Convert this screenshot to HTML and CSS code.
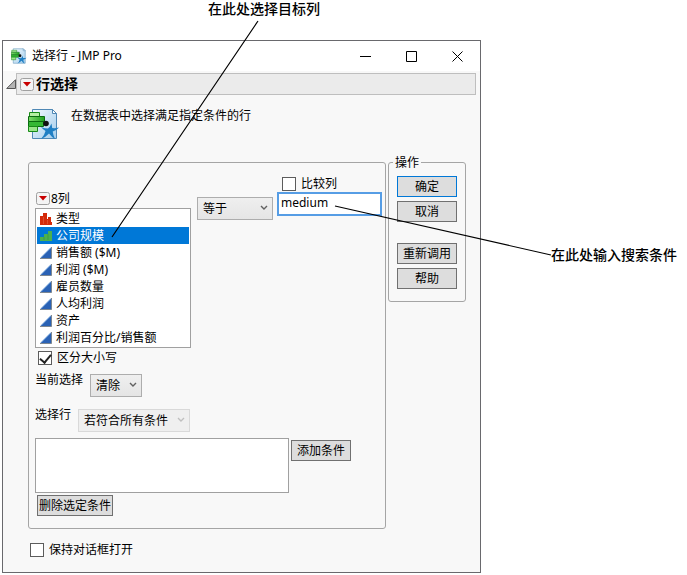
FILE: index.html
```html
<!DOCTYPE html>
<html lang="zh-CN">
<head>
    <meta charset="UTF-8">
    <title>选择行 - JMP Pro</title>
    <link rel="stylesheet" href="styles.css">
</head>
<body>
<!-- shared icons -->
<svg class="defs" width="0" height="0">
    <defs>
        <linearGradient id="page-fill" x1="0" y1="0" x2="1" y2="1">
            <stop offset="0" stop-color="#f2f9fe"/>
            <stop offset="1" stop-color="#a3cdec"/>
        </linearGradient>
        <linearGradient id="bar-fill" x1="0" y1="0" x2="1" y2="0">
            <stop offset="0" stop-color="#7fdc6b"/>
            <stop offset="1" stop-color="#1fa01f"/>
        </linearGradient>
    </defs>
    <symbol id="rows" viewBox="0 0 32 32">
        <path d="M4.500 1.500h20l4 4v25h-24z" fill="url(#page-fill)" stroke="#4f88b5"/>
        <path d="M24.500 1.500v4h4z" fill="#fff" stroke="#4f88b5"/>
        <path d="M1.500 4.500h10v4h-10z" fill="#b5efa4" stroke="#178a17"/>
        <path d="M.5 8.500h16v5H.5z" fill="url(#bar-fill)" stroke="#0b6b10"/>
        <path d="M.5 13.500h15v5H.5z" fill="#35b834" stroke="#0b6b10"/>
        <path d="M.5 18.500h9v5H.5z" fill="#9be58a" stroke="#178a17"/>
        <circle cx="18" cy="15.500" r="2.800" fill="#111"/>
        <path d="M13 19q4 1.500 7 1.500 2-1.500 3.500-5l.7 4.500q3 .5 7-.5-3 3-6.500 4 .5 4 2.300 7.500-3-1.500-6-5.500-3 3.500-8 5.500 3.500-3.500 4.500-8-2.500-1.500-4.500-4z" fill="#1f7fc4"/>
    </symbol>
    <symbol id="chevron" viewBox="0 0 8 6">
        <path d="M1 1l3 3 3-3" fill="none" stroke="currentColor" stroke-width="1.400"/>
    </symbol>
    <symbol id="red" viewBox="0 0 14 13">
        <rect x=".5" y=".5" width="13" height="12" rx="2" fill="#f4f4f4" stroke="#a0a0a0"/>
        <path d="M3 4h8L7 8.500z" fill="#c80000"/>
    </symbol>
    <symbol id="nominal" viewBox="0 0 12 12">
        <path d="M0 3h3V0h4v6h1V4h3v5h1v3H0z" fill="#d42a0a"/>
        <path d="M3.500 4v7M7.500 7v4" stroke="#ef8060" stroke-width=".4"/>
    </symbol>
    <symbol id="ordinal" viewBox="0 0 12 12">
        <path d="M0 7h4V4h4V1h4v10H0z" fill="#4bb04f"/>
        <path d="M4 7v3M8 4v6" stroke="#2e8a3c" stroke-width=".5"/>
    </symbol>
    <symbol id="continuous" viewBox="0 0 12 12">
        <path d="M0 11.500L11.500 0v11.500z" fill="#2a62b5"/>
        <path d="M1 10.500L11 .5" stroke="#79a9e0" stroke-width=".8"/>
        <path d="M0 11.500h11.500V0" fill="none" stroke="#7d8791"/>
    </symbol>
</svg>

<div class="figure">
    <p class="callout callout-top">在此处选择目标列</p>

    <div class="dialog">
        <div class="titlebar">
            <svg class="title-icon"><use href="#rows"/></svg>
            <span class="title">选择行 - JMP Pro</span>
            <button class="win-btn" aria-label="最小化"><svg viewBox="0 0 11 11"><path d="M0 5.500h11"/></svg></button>
            <button class="win-btn" aria-label="最大化"><svg viewBox="0 0 11 11"><path d="M.5.5h10v10H.5z"/></svg></button>
            <button class="win-btn" aria-label="关闭"><svg viewBox="0 0 11 11"><path d="M.5.5l10 10M10.500.5l-10 10"/></svg></button>
        </div>

        <div class="outline">
            <svg class="disclosure" viewBox="0 0 10 10"><path d="M.7 9.500h8.800V.7z"/></svg>
            <h1 class="outline-title"><svg class="red"><use href="#red"/></svg>行选择</h1>
        </div>

        <div class="intro">
            <svg class="intro-icon"><use href="#rows"/></svg>
            <p>在数据表中选择满足指定条件的行</p>
        </div>

        <div class="content">
            <div class="panel">
                <div class="criteria">
                    <div class="columns">
                        <div class="columns-head"><svg class="red"><use href="#red"/></svg>8列</div>
                        <ul class="list" role="listbox" aria-label="列">
                            <li role="option"><svg><use href="#nominal"/></svg>类型</li>
                            <li role="option" class="selected" aria-selected="true"><svg><use href="#ordinal"/></svg>公司规模</li>
                            <li role="option"><svg><use href="#continuous"/></svg>销售额 ($M)</li>
                            <li role="option"><svg><use href="#continuous"/></svg>利润 ($M)</li>
                            <li role="option"><svg><use href="#continuous"/></svg>雇员数量</li>
                            <li role="option"><svg><use href="#continuous"/></svg>人均利润</li>
                            <li role="option"><svg><use href="#continuous"/></svg>资产</li>
                            <li role="option"><svg><use href="#continuous"/></svg>利润百分比/销售额</li>
                        </ul>
                    </div>
                    <div class="dropdown operator">
                        <select aria-label="运算符"><option>等于</option></select>
                        <svg><use href="#chevron"/></svg>
                    </div>
                    <div class="value">
                        <label class="check"><input type="checkbox">比较列</label>
                        <input type="text" class="text" value="medium" aria-label="值">
                    </div>
                </div>

                <label class="check match-case"><input type="checkbox" checked>区分大小写</label>

                <div class="field">
                    <label for="current">当前选择</label>
                    <div class="dropdown">
                        <select id="current"><option>清除</option></select>
                        <svg><use href="#chevron"/></svg>
                    </div>
                </div>
                <div class="field">
                    <label for="which">选择行</label>
                    <div class="dropdown disabled">
                        <select id="which" disabled><option>若符合所有条件</option></select>
                        <svg><use href="#chevron"/></svg>
                    </div>
                </div>

                <div class="conditions">
                    <select class="condition-list" multiple aria-label="条件"></select>
                    <button class="btn">添加条件</button>
                </div>
                <button class="btn remove">删除选定条件</button>
            </div>

            <fieldset class="actions">
                <legend>操作</legend>
                <button class="btn default">确定</button>
                <button class="btn">取消</button>
                <button class="btn recall">重新调用</button>
                <button class="btn">帮助</button>
            </fieldset>
        </div>

        <label class="check keep-open"><input type="checkbox">保持对话框打开</label>
    </div>

    <p class="callout callout-side">在此处输入搜索条件</p>

    <svg class="leaders">
        <path d="M258 21L112 237M335 206L551 255"/>
    </svg>
</div>
</body>
</html>
```

FILE: styles.css
```css
* {
    box-sizing: border-box;
}

body {
    margin: 0;
    background: #fff;
    color: #000;
    font: 12px/16px "Noto Sans", "Noto Sans CJK SC", sans-serif;
}

p, h1, ul {
    margin: 0;
    padding: 0;
}

button, input, select {
    font: inherit;
    color: inherit;
    margin: 0;
}

svg {
    display: block;
    flex: none;
}

.defs {
    position: absolute;
}

.figure {
    position: relative;
    display: grid;
    grid-template-columns: 1fr 206px;
    grid-template-rows: 40px auto;
    padding-left: 2px;
}

/* callouts */
.callout {
    font-size: 14px;
    font-weight: 500;
    line-height: 18px;
    white-space: nowrap;
}

.callout-top {
    grid-column: 1 / 3;
    padding-left: 206px;
}

.callout-side {
    padding: 206px 0 0 70px;
}

.leaders {
    position: absolute;
    top: 0;
    left: 0;
    width: 100%;
    height: 100%;
    pointer-events: none;
    fill: none;
    stroke: #000;
    stroke-width: 1.2;
}

/* dialog */
.dialog {
    background: #f8f8f8;
    border: 1px solid #69696d;
    padding-bottom: 14px;
}

.titlebar {
    display: flex;
    align-items: center;
    height: 30px;
    padding-left: 8px;
    background: #fff;
}

.title-icon {
    width: 16px;
    height: 16px;
}

.title {
    flex: 1;
    padding-left: 5px;
}

.win-btn {
    display: flex;
    align-items: center;
    justify-content: center;
    width: 46px;
    height: 30px;
    padding: 0;
    border: 0;
    background: none;
}

.win-btn svg {
    width: 11px;
    height: 11px;
    fill: none;
    stroke: #000;
}

.outline {
    display: flex;
    align-items: center;
    padding: 2px 4px 0 3px;
}

.disclosure {
    width: 10px;
    height: 10px;
    fill: #b4b4b4;
    stroke: #555;
}

.outline-title {
    flex: 1;
    display: flex;
    align-items: center;
    gap: 2px;
    height: 22px;
    padding-left: 3px;
    border: 1px solid #bebebe;
    background: #ebebeb;
    font-size: 14px;
    font-weight: bold;
}

.red {
    width: 14px;
    height: 13px;
}

.intro {
    display: flex;
    gap: 11px;
    padding: 13px 14px 14px 25px;
}

.intro-icon {
    width: 32px;
    height: 32px;
}

.content {
    display: flex;
    align-items: flex-start;
    gap: 2px;
    padding: 0 14px 0 25px;
}

.panel {
    flex: 1;
    margin-top: 8px;
    padding: 0 3px 12px 6px;
    border: 1px solid #a5a5a5;
    border-radius: 3px;
}

.criteria {
    display: flex;
    align-items: flex-start;
}

.columns {
    width: 156px;
    padding-top: 26px;
}

.columns-head {
    display: flex;
    align-items: center;
    gap: 1px;
    height: 19px;
    padding-left: 1px;
}

.list {
    padding: 1px;
    border: 1px solid #a0a0a0;
    background: #fff;
    list-style: none;
}

.list li {
    display: flex;
    align-items: center;
    gap: 4px;
    height: 17px;
    padding-left: 3px;
}

.list svg {
    width: 12px;
    height: 12px;
}

.list .selected {
    background: #0078d7;
    color: #fff;
}

/* drop-downs */
.dropdown {
    position: relative;
    height: 23px;
}

.dropdown select {
    display: block;
    appearance: none;
    width: 100%;
    height: 23px;
    padding: 0 20px 0 5px;
    border: 1px solid #adadad;
    border-radius: 0;
    background: linear-gradient(#efefef, #e5e5e5);
}

.dropdown svg {
    position: absolute;
    top: 8px;
    right: 5px;
    width: 8px;
    height: 6px;
    color: #606060;
    pointer-events: none;
}

.disabled select {
    border-color: #d9d9d9;
    background: #efefef;
    opacity: 1;
}

.disabled svg {
    color: #bfbfbf;
}

.operator {
    width: 76px;
    margin: 34px 4px 0 6px;
}

.value {
    flex: 1;
    padding-top: 13px;
}

.value .check {
    height: 16px;
    padding-left: 5px;
}

.text {
    display: block;
    width: 100%;
    height: 24px;
    padding: 0 2px 3px;
    border: 2px solid #569de5;
    background: #fff;
    outline: none;
}

/* tick boxes */
.check {
    display: flex;
    align-items: center;
    gap: 5px;
}

.check input {
    appearance: none;
    display: flex;
    align-items: center;
    justify-content: center;
    width: 14px;
    height: 14px;
    border: 1px solid #5c5c5c;
    background: #fff;
}

.check input:checked::before {
    content: "";
    width: 5px;
    height: 9px;
    margin-bottom: 2px;
    border: solid #222;
    border-width: 0 2px 2px 0;
    transform: rotate(40deg);
}

.match-case {
    height: 20px;
    padding-left: 3px;
}

.keep-open {
    height: 16px;
    margin: 13px 0 0 27px;
}

.field {
    display: flex;
    align-items: flex-start;
    gap: 7px;
    margin-top: 6px;
}

.field + .field {
    margin-top: 12px;
}

.field label {
    line-height: 12px;
}

.conditions {
    display: flex;
    align-items: flex-start;
    gap: 2px;
    margin-top: 6px;
}

.condition-list {
    width: 254px;
    height: 55px;
    border: 1px solid #a0a0a0;
    border-radius: 0;
    background: #fff;
    overflow: hidden;
}

/* buttons */
.btn {
    display: block;
    min-width: 60px;
    height: 21px;
    padding: 0 1px;
    border: 1px solid #707070;
    background: #ddd;
    line-height: 18px;
    white-space: nowrap;
}

.conditions .btn {
    margin-top: 2px;
}

.remove {
    margin: 2px 0 0 2px;
}

.default {
    border-color: #0078d7;
}

.actions {
    width: 78px;
    margin: 0;
    padding: 5px 8px 12px;
    border: 1px solid #a5a5a5;
    border-radius: 3px;
}

.actions legend {
    margin-left: -4px;
    padding: 0 2px;
    line-height: 17px;
}

.actions .btn {
    width: 60px;
    margin-bottom: 4px;
}

.actions .btn:last-child {
    margin-bottom: 0;
}

.actions .recall {
    margin-top: 21px;
}
```
